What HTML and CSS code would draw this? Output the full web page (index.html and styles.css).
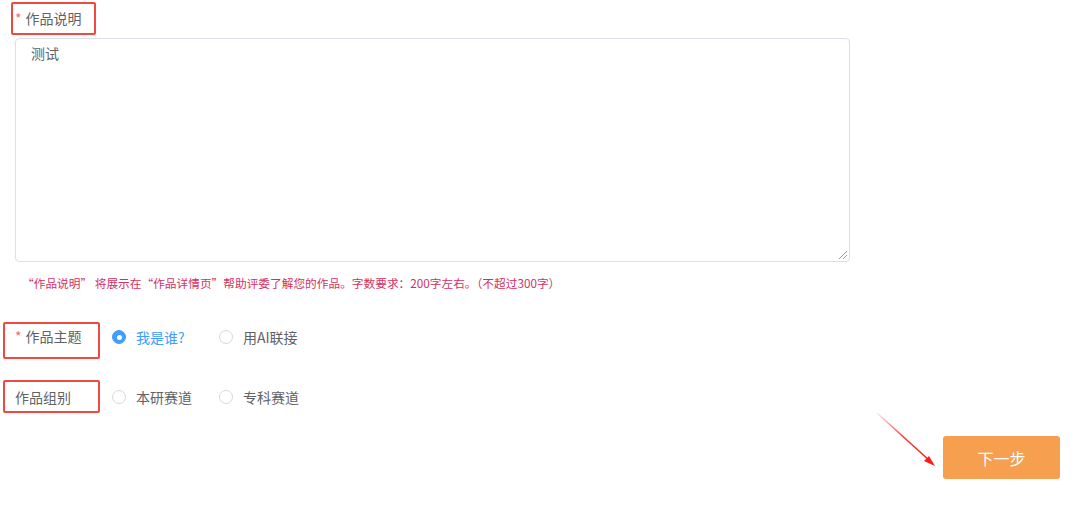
FILE: index.html
```html
<!DOCTYPE html>
<html lang="zh">
<head>
<meta charset="utf-8">
<link rel="stylesheet" href="styles.css">
</head>
<body>
<div class="page">
  <div class="field">
    <div class="mark mark-desc"><span class="req">*</span>作品说明</div>
    <div class="textarea">测试<span class="grip"></span></div>
    <div class="help">“作品说明” 将展示在“作品详情页”帮助评委了解您的作品。字数要求：200字左右。（不超过300字）</div>
  </div>

  <div class="row row-theme">
    <div class="mark mark-theme"><span class="req">*</span>作品主题</div>
    <div class="radios">
      <label class="radio checked"><span class="dot"></span>我是谁?</label>
      <label class="radio"><span class="dot"></span>用AI联接</label>
    </div>
  </div>

  <div class="row row-group">
    <div class="mark mark-group">作品组别</div>
    <div class="radios">
      <label class="radio"><span class="dot"></span>本研赛道</label>
      <label class="radio"><span class="dot"></span>专科赛道</label>
    </div>
  </div>

  <div class="actions">
    <button class="next">下一步</button>
  </div>

  <svg class="arrow" width="70" height="62" viewBox="0 0 70 62">
    <defs>
      <linearGradient id="g" x1="0" y1="0" x2="1" y2="1">
        <stop offset="0" stop-color="#ff2a2a" stop-opacity="0.1"/>
        <stop offset="0.5" stop-color="#ff2020" stop-opacity="0.9"/>
        <stop offset="1" stop-color="#ff1a1a"/>
      </linearGradient>
    </defs>
    <line x1="2" y1="1" x2="55" y2="49" stroke="url(#g)" stroke-width="1.6"/>
    <polygon points="60,54 49,49 54,44" fill="#ff1a1a"/>
  </svg>
</div>
</body>
</html>
```

FILE: styles.css
```css
* { box-sizing: border-box; }
html, body { margin: 0; padding: 0; background: #fff; }
body {
  font-family: "Noto Sans CJK SC", "Noto Sans", sans-serif;
  font-size: 14px;
  color: #606266;
  width: 1080px;
  height: 511px;
  overflow: hidden;
}
.page { position: relative; padding-top: 2px; }

.mark {
  border: 2px solid #ef4a42;
  border-radius: 2px;
  display: flex;
  color: #606266;
  font-size: 14px;
  white-space: nowrap;
}
.req { color: #f56c6c; margin-right: 4px; }

.mark-desc {
  margin-left: 11px;
  width: 85px;
  height: 33px;
  align-items: center;
  padding: 0 0 2px 2px;
}

.textarea {
  position: relative;
  margin: 3px 0 0 15px;
  width: 835px;
  height: 224px;
  border: 1px solid #dcdfe6;
  border-radius: 4px;
  padding: 2px 15px;
  line-height: 24px;
  color: #606266;
}
.grip {
  position: absolute;
  right: 2px;
  bottom: 2px;
  width: 8px;
  height: 8px;
  background: linear-gradient(135deg, transparent 45%, #999 45%, #999 55%, transparent 55%, transparent 70%, #999 70%, #999 80%, transparent 80%);
}

.help {
  margin: 11px 0 0 22px;
  font-size: 11.7px;
  line-height: 20px;
  color: #d42f63;
}

.row { display: flex; margin-left: 3px; }
.row-theme { margin-top: 29px; }
.row-group { margin-top: 21px; }

.mark-theme {
  width: 97px;
  height: 37px;
  padding: 1px 0 0 10px;
  line-height: 22px;
}
.mark-group {
  width: 97px;
  height: 33px;
  align-items: center;
  padding-left: 10px;
}

.radios {
  display: grid;
  grid-template-columns: 107px auto;
  margin-left: 12px;
  align-items: center;
}
.row-theme .radios { height: 30px; }
.radio {
  display: flex;
  align-items: center;
  color: #606266;
  font-size: 14px;
}
.dot {
  width: 14px;
  height: 14px;
  border: 1px solid #d6d9e0;
  border-radius: 50%;
  background: #fff;
  margin-right: 10px;
  position: relative;
}
.radio.checked { color: #409eff; }
.radio.checked .dot { background: #409eff; border-color: #409eff; }
.radio.checked .dot::after {
  content: "";
  position: absolute;
  left: 3.5px;
  top: 3.5px;
  width: 5px;
  height: 5px;
  border-radius: 50%;
  background: #fff;
}

.actions {
  display: flex;
  justify-content: flex-end;
  margin-top: 23px;
  padding-right: 20px;
}
.next {
  width: 117px;
  height: 43px;
  border: none;
  border-radius: 3px;
  background: #f59f4f;
  color: #fff;
  font-family: inherit;
  font-size: 16px;
  padding: 0;
}

.arrow {
  position: absolute;
  left: 875px;
  top: 412px;
}
```
